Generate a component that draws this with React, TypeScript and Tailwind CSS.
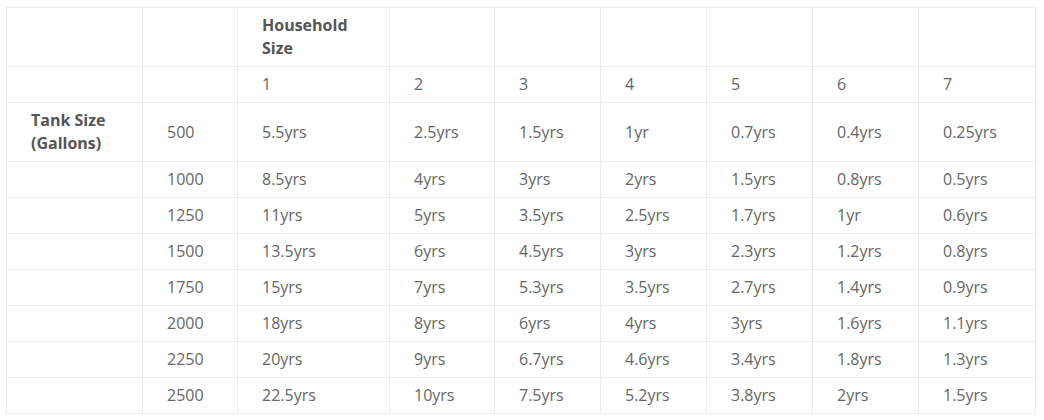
import React from 'react'

const sizes = ['1', '2', '3', '4', '5', '6', '7']

const rows: [string, string[]][] = [
  ['500', ['5.5yrs', '2.5yrs', '1.5yrs', '1yr', '0.7yrs', '0.4yrs', '0.25yrs']],
  ['1000', ['8.5yrs', '4yrs', '3yrs', '2yrs', '1.5yrs', '0.8yrs', '0.5yrs']],
  ['1250', ['11yrs', '5yrs', '3.5yrs', '2.5yrs', '1.7yrs', '1yr', '0.6yrs']],
  ['1500', ['13.5yrs', '6yrs', '4.5yrs', '3yrs', '2.3yrs', '1.2yrs', '0.8yrs']],
  ['1750', ['15yrs', '7yrs', '5.3yrs', '3.5yrs', '2.7yrs', '1.4yrs', '0.9yrs']],
  ['2000', ['18yrs', '8yrs', '6yrs', '4yrs', '3yrs', '1.6yrs', '1.1yrs']],
  ['2250', ['20yrs', '9yrs', '6.7yrs', '4.6yrs', '3.4yrs', '1.8yrs', '1.3yrs']],
  ['2500', ['22.5yrs', '10yrs', '7.5yrs', '5.2yrs', '3.8yrs', '2yrs', '1.5yrs']],
]

const cell = 'border border-[#ececec] py-[6px] pl-6 pr-2 align-middle text-left'
const bold = 'font-bold text-[#555]'

export default function App() {
  return (
    <div
      className="min-h-screen bg-white pl-[6px] pt-[7px] text-[16px] leading-[23px] text-[#666]"
      style={{ fontFamily: '"Open Sans", "Liberation Sans", sans-serif' }}
    >
      <table className="table-fixed border-collapse" style={{ width: 1029 }}>
        <colgroup>
          <col className="w-[136px]" />
          <col className="w-[95px]" />
          <col className="w-[152px]" />
          <col className="w-[105px]" />
          <col className="w-[106px]" />
          <col className="w-[106px]" />
          <col className="w-[106px]" />
          <col className="w-[106px]" />
          <col className="w-[117px]" />
        </colgroup>
        <tbody>
          <tr>
            <td className={cell}></td>
            <td className={cell}></td>
            <td className={`${cell} ${bold}`}>
              Household
              <br />
              Size
            </td>
            {sizes.slice(1).map((s) => (
              <td key={s} className={cell}></td>
            ))}
          </tr>
          <tr>
            <td className={cell}></td>
            <td className={cell}></td>
            {sizes.map((s) => (
              <td key={s} className={cell}>
                {s}
              </td>
            ))}
          </tr>
          {rows.map(([tank, vals], i) => (
            <tr key={tank}>
              <td className={`${cell} ${bold}`}>
                {i === 0 && (
                  <>
                    Tank Size
                    <br />
                    (Gallons)
                  </>
                )}
              </td>
              <td className={cell}>{tank}</td>
              {vals.map((v, j) => (
                <td key={j} className={cell}>
                  {v}
                </td>
              ))}
            </tr>
          ))}
        </tbody>
      </table>
    </div>
  )
}
